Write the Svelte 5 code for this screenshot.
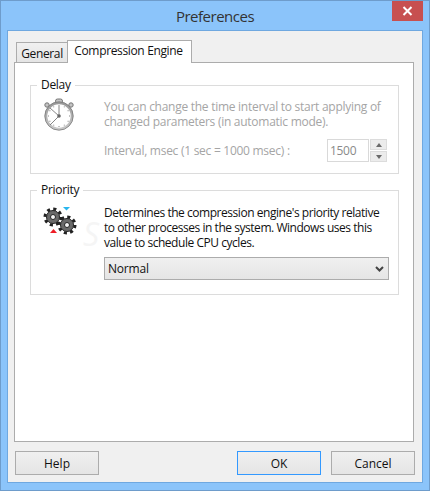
<script>
    let ticks = Array.from({ length: 12 }, (_, i) => i * 30);
    let priority = "Normal";
</script>

<div class="window">
    <div class="titlebar">
        <span class="title">Preferences</span>
        <div class="close">
            <svg width="11" height="10" viewBox="0 0 11 10">
                <path d="M1.5 1 L9.5 9 M9.5 1 L1.5 9" stroke="#fff" stroke-width="2" fill="none" />
            </svg>
        </div>
    </div>
    <div class="client">
        <div class="tabs">
            <div class="tab">General</div>
            <div class="tab active">Compression Engine</div>
        </div>
        <div class="panel">
            <fieldset class="delay">
                <legend>Delay</legend>
                <div class="row">
                    <svg class="icon" width="36" height="36" viewBox="0 0 36 36">
                        <defs>
                            <linearGradient id="rim" x1="0" y1="0" x2="0" y2="1">
                                <stop offset="0" stop-color="#9a9a9a" />
                                <stop offset="1" stop-color="#c8c8c8" />
                            </linearGradient>
                        </defs>
                        <circle cx="6" cy="9" r="2.2" fill="#c4c4c4" stroke="#777" />
                        <circle cx="30" cy="9" r="2.2" fill="#c4c4c4" stroke="#777" />
                        <rect x="14.5" y="3" width="7" height="4" rx="2" fill="#c4c4c4" stroke="#777" />
                        <circle cx="18" cy="20" r="13" fill="#fff" stroke="url(#rim)" stroke-width="2.6" />
                        <circle cx="18" cy="20" r="14.2" fill="none" stroke="#777" stroke-width="0.8" />
                        {#each ticks as t}
                            <rect x="17.5" y="9" width="1" height="1" fill="#888" transform="rotate({t} 18 20)" />
                        {/each}
                        <path d="M18 20 V10 M18 20 L9 12 M18 20 L9 29" stroke="#666" stroke-width="0.8" fill="none" />
                        <circle cx="18" cy="20" r="1.8" fill="#666" />
                    </svg>
                    <div class="body">
                        <p class="muted">You can change the time interval to start applying of changed parameters (in automatic mode).</p>
                        <div class="interval">
                            <span class="muted">Interval, msec (1 sec = 1000 msec) :</span>
                            <div class="spinner">
                                <div class="spin-input">1500</div>
                                <div class="spin-btns">
                                    <div class="spin-btn"><span class="up"></span></div>
                                    <div class="spin-btn"><span class="down"></span></div>
                                </div>
                            </div>
                        </div>
                    </div>
                </div>
            </fieldset>

            <fieldset class="priority">
                <legend>Priority</legend>
                <div class="row">
                    <svg class="icon" width="36" height="30" viewBox="0 0 36 30">
                        <g fill="none">
                            <circle cx="10" cy="12" r="8" stroke="#222" stroke-width="3" stroke-dasharray="3.1 3.18" />
                            <circle cx="10" cy="12" r="6.5" fill="#6a6a6a" stroke="#222" />
                            <circle cx="10" cy="12" r="2.5" fill="#f4f4f4" stroke="#222" />
                            <circle cx="24" cy="20" r="8" stroke="#222" stroke-width="3" stroke-dasharray="3.1 3.18" />
                            <circle cx="24" cy="20" r="6.5" fill="#6a6a6a" stroke="#222" />
                            <circle cx="24" cy="20" r="2.5" fill="#f4f4f4" stroke="#222" />
                        </g>
                        <path d="M20 2 H27 L23.5 5.5 Z" fill="#29b6ee" />
                        <path d="M7 28 H14 L10.5 24 Z" fill="#ee1c25" />
                    </svg>
                    <div class="body">
                        <p>Determines the compression engine's priority relative to other processes in the system. Windows uses this value to schedule CPU cycles.</p>
                        <div class="select">
                            <span>{priority}</span>
                            <svg width="9" height="6" viewBox="0 0 9 6">
                                <path d="M1 1 L4.5 4.5 L8 1" stroke="#444" stroke-width="2" fill="none" />
                            </svg>
                        </div>
                    </div>
                </div>
                <span class="watermark">S</span>
            </fieldset>
        </div>
        <div class="footer">
            <button>Help</button>
            <div class="right">
                <button class="default">OK</button>
                <button>Cancel</button>
            </div>
        </div>
    </div>
</div>

<style>
    :global(body) {
        margin: 0;
    }
    .window {
        width: 430px;
        height: 491px;
        box-sizing: border-box;
        border: 1px solid #6e9ccb;
        background: #8bc4fa;
        display: flex;
        flex-direction: column;
        font-family: "Open Sans", "Noto Sans", sans-serif;
        font-size: 12px;
        color: #111;
    }
    .titlebar {
        height: 29px;
        flex: none;
        position: relative;
        display: flex;
        align-items: center;
        justify-content: center;
    }
    .title {
        font-size: 15px;
        color: #333;
        letter-spacing: -0.5px;
    }
    .close {
        position: absolute;
        top: 0;
        right: 6px;
        width: 31px;
        height: 20px;
        background: #c75050;
        display: flex;
        align-items: center;
        justify-content: center;
    }
    .client {
        flex: 1;
        margin: 0 6px 7px;
        border: 1px solid #6fa8e0;
        background: #f0f0f0;
        padding: 9px 8px 7px 6px;
        display: flex;
        flex-direction: column;
    }
    .tabs {
        display: flex;
        align-items: flex-end;
        height: 22px;
        padding-left: 2px;
        position: relative;
        z-index: 1;
    }
    .tab {
        height: 20px;
        box-sizing: border-box;
        width: 51px;
        border: 1px solid #acacac;
        border-right: none;
        border-bottom: none;
        background: linear-gradient(#f0f0f0, #e5e5e5);
        text-align: center;
        line-height: 21px;
        letter-spacing: -0.35px;
    }
    .tab.active {
        height: 23px;
        width: 125px;
        margin-bottom: -1px;
        padding-right: 2px;
        border-right: 1px solid #acacac;
        background: #fff;
        line-height: 20px;
        letter-spacing: -0.35px;
    }
    .panel {
        flex: 1;
        background: #fff;
        border: 1px solid #acacac;
        padding: 14px 14px 0 15px;
        display: flex;
        flex-direction: column;
        gap: 8px;
    }
    fieldset {
        margin: 0;
        padding: 0 9px 0 8px;
        border: 1px solid #dcdcdc;
        position: relative;
        z-index: 0;
    }
    legend {
        margin-left: -2px;
        padding: 0 4px;
        line-height: 16px;
        letter-spacing: -0.3px;
    }
    .delay {
        height: 97px;
        box-sizing: border-box;
    }
    .priority {
        height: 113px;
        box-sizing: border-box;
    }
    .row {
        display: flex;
    }
    .icon {
        flex: none;
    }
    .delay .icon {
        margin: 3px 27px 0 2px;
    }
    .priority .icon {
        margin: 7px 25px 0 4px;
    }
    .body {
        flex: 1;
        min-width: 0;
        padding-top: 6px;
    }
    .priority .body {
        padding-top: 7px;
    }
    p {
        margin: 0;
        line-height: 15px;
        letter-spacing: -0.46px;
    }
    .muted {
        color: #a5a5a5;
        letter-spacing: -0.27px;
    }
    .interval {
        display: flex;
        align-items: center;
        justify-content: space-between;
        margin-top: 10px;
        padding-right: 2px;
    }
    .spinner {
        display: flex;
        height: 23px;
    }
    .spin-input {
        width: 42px;
        box-sizing: border-box;
        border: 1px solid #d9d9d9;
        padding-left: 2px;
        line-height: 21px;
        color: #8a8a8a;
        letter-spacing: -0.3px;
    }
    .spin-btns {
        width: 17px;
        margin-left: 1px;
        display: flex;
        flex-direction: column;
        gap: 1px;
    }
    .spin-btn {
        flex: 1;
        background: #ececec;
        border: 1px solid #dcdcdc;
        display: flex;
        align-items: center;
        justify-content: center;
    }
    .up,
    .down {
        width: 0;
        height: 0;
        border-left: 3.5px solid transparent;
        border-right: 3.5px solid transparent;
    }
    .up {
        border-bottom: 4px solid #6a6a6a;
    }
    .down {
        border-top: 4px solid #6a6a6a;
    }
    .select {
        margin-top: 7px;
        height: 23px;
        box-sizing: border-box;
        border: 1px solid #acacac;
        background: linear-gradient(#f0f0f0, #e5e5e5);
        display: flex;
        align-items: center;
        justify-content: space-between;
        padding: 0 4px 0 3px;
        letter-spacing: -0.2px;
    }
    .watermark {
        position: absolute;
        left: 52px;
        top: 14px;
        font-size: 32px;
        font-style: italic;
        color: #f5f5f5;
        z-index: -1;
    }
    .footer {
        display: flex;
        justify-content: space-between;
        margin: 9px -1px 0 1px;
    }
    .right {
        display: flex;
        gap: 10px;
    }
    button {
        width: 84px;
        height: 24px;
        box-sizing: border-box;
        border: 1px solid #acacac;
        background: linear-gradient(#f0f0f0, #e5e5e5);
        font: inherit;
        color: #111;
        padding: 0;
    }
    button.default {
        border-color: #3399ff;
    }
</style>
